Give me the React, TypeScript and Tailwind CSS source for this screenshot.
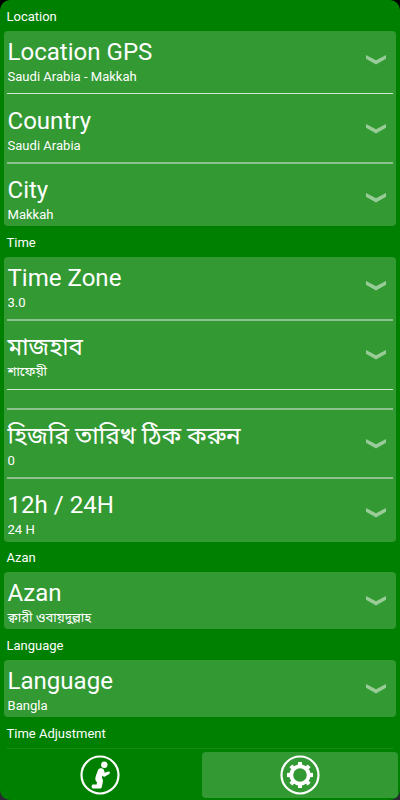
import React from "react";

function Chevron() {
  return (
    <svg className="mr-[10px] mt-[15px] h-[28px] w-5 shrink-0" viewBox="0 0 20 28">
      <path d="M0 9 L10 14.2 L20 9 V12.8 L10 18.6 L0 12.8 Z" fill="#fff" fillOpacity="0.5" />
    </svg>
  );
}

function Row({ title, sub, wide }: { title: string; sub: string; wide?: boolean }) {
  return (
    <div className="flex h-[57.25px] shrink-0 justify-between pl-1">
      <div className="pt-1">
        <div className={`h-[34px] whitespace-nowrap leading-[34px] ${wide ? "text-[24.35px]" : "text-[24.05px]"}`}>{title}</div>
        <div className="h-4 whitespace-nowrap text-[13.05px] leading-4">{sub}</div>
      </div>
      <Chevron />
    </div>
  );
}

function Divider({ thick }: { thick?: boolean }) {
  return (
    <div className="h-3 shrink-0 pl-[3.5px] pr-[3.5px] pt-[5px]">
      <div className={thick ? "h-[2px] bg-[#8fc08f]" : "h-px bg-[#d0e8d0]"} />
    </div>
  );
}

function Heading({ children }: { children: React.ReactNode }) {
  return <div className="h-[30.65px] shrink-0 pl-[3px] pt-[0.6px] text-[13px] leading-[32.4px]">{children}</div>;
}

function Card({ children }: { children: React.ReactNode }) {
  return <div className="flex shrink-0 flex-col rounded-[4px] bg-[#339933]">{children}</div>;
}

function PrayerIcon() {
  return (
    <svg className="h-10 w-10" viewBox="0 0 40 40" fill="#fff">
      <circle cx="20" cy="20" r="18.5" fill="none" stroke="#fff" strokeWidth="2.2" />
      <circle cx="24.3" cy="9.8" r="3.2" />
      <path d="M18.2 14.6 C19.6 12.8 22.8 12.8 23.8 14.8 L24.8 17.8 L28.4 16.6 C30 16.2 30.4 18.2 29.2 18.9 L25 21.4 C23.8 22 22.8 21.4 22.4 20.6 L21.9 22.8 C23.4 24.8 23 26.6 22.4 29 L21.7 32.2 C21.4 33.2 20.8 33.6 19.8 33.6 H13 C11.3 33.6 11.3 30 12.8 29.6 L16.6 29.4 L17 27.2 C15 25.6 15 23.8 15.8 21 Z" />
    </svg>
  );
}

const TEETH = [0, 45, 90, 135, 180, 225, 270, 315];

function GearIcon() {
  return (
    <svg className="h-10 w-10" viewBox="0 0 40 40" fill="#fff">
      <circle cx="20" cy="20" r="18.5" fill="none" stroke="#fff" strokeWidth="2.2" />
      <circle cx="20" cy="20" r="8.7" fill="none" stroke="#fff" strokeWidth="3.8" />
      {TEETH.map((a) => (
        <path key={a} d="M17.8 10.5 L18.1 7 H21.9 L22.2 10.5 Z" transform={`rotate(${a} 20 20)`} />
      ))}
    </svg>
  );
}

export default function App() {
  return (
    <div className="h-[800px] w-[400px] bg-[linear-gradient(#000_50%,#2a2a35_50%)] font-['Roboto','Noto_Sans_Bengali',sans-serif] text-white">
      <div className="flex h-full flex-col overflow-hidden rounded-[10px] bg-[#008000]">
        <div className="flex h-[747px] shrink-0 flex-col overflow-hidden pl-[3.5px] pr-[4px]">
          <Heading>Location</Heading>
          <Card>
            <Row title="Location GPS" sub="Saudi Arabia - Makkah" />
            <Divider />
            <Row title="Country" sub="Saudi Arabia" />
            <Divider thick />
            <Row title="City" sub="Makkah" />
          </Card>
          <Heading>Time</Heading>
          <Card>
            <Row title="Time Zone" sub="3.0" />
            <Divider thick />
            <Row title="মাজহাব" sub="শাফেয়ী" />
            <Divider />
            <div className="h-[7.5px]" />
            <Divider thick />
            <Row title="হিজরি তারিখ ঠিক করুন" sub="0" wide />
            <Divider thick />
            <Row title="12h / 24H" sub="24 H" />
          </Card>
          <Heading>Azan</Heading>
          <Card>
            <Row title="Azan" sub="ক্বারী ওবায়দুল্লাহ" />
          </Card>
          <Heading>Language</Heading>
          <Card>
            <Row title="Language" sub="Bangla" />
          </Card>
          <Heading>Time Adjustment</Heading>
        </div>
        <div className="mx-[6px] mt-[0.5px] h-[1.5px] shrink-0 bg-[#148a14]" />
        <div className="flex h-[49px] shrink-0 px-[2px] pt-[3px]">
          <div className="flex h-[46px] w-[200px] items-center justify-center pr-1">
            <PrayerIcon />
          </div>
          <div className="flex h-[46px] w-[196px] items-center justify-center rounded-[4px] bg-[#339933]">
            <GearIcon />
          </div>
        </div>
      </div>
    </div>
  );
}
